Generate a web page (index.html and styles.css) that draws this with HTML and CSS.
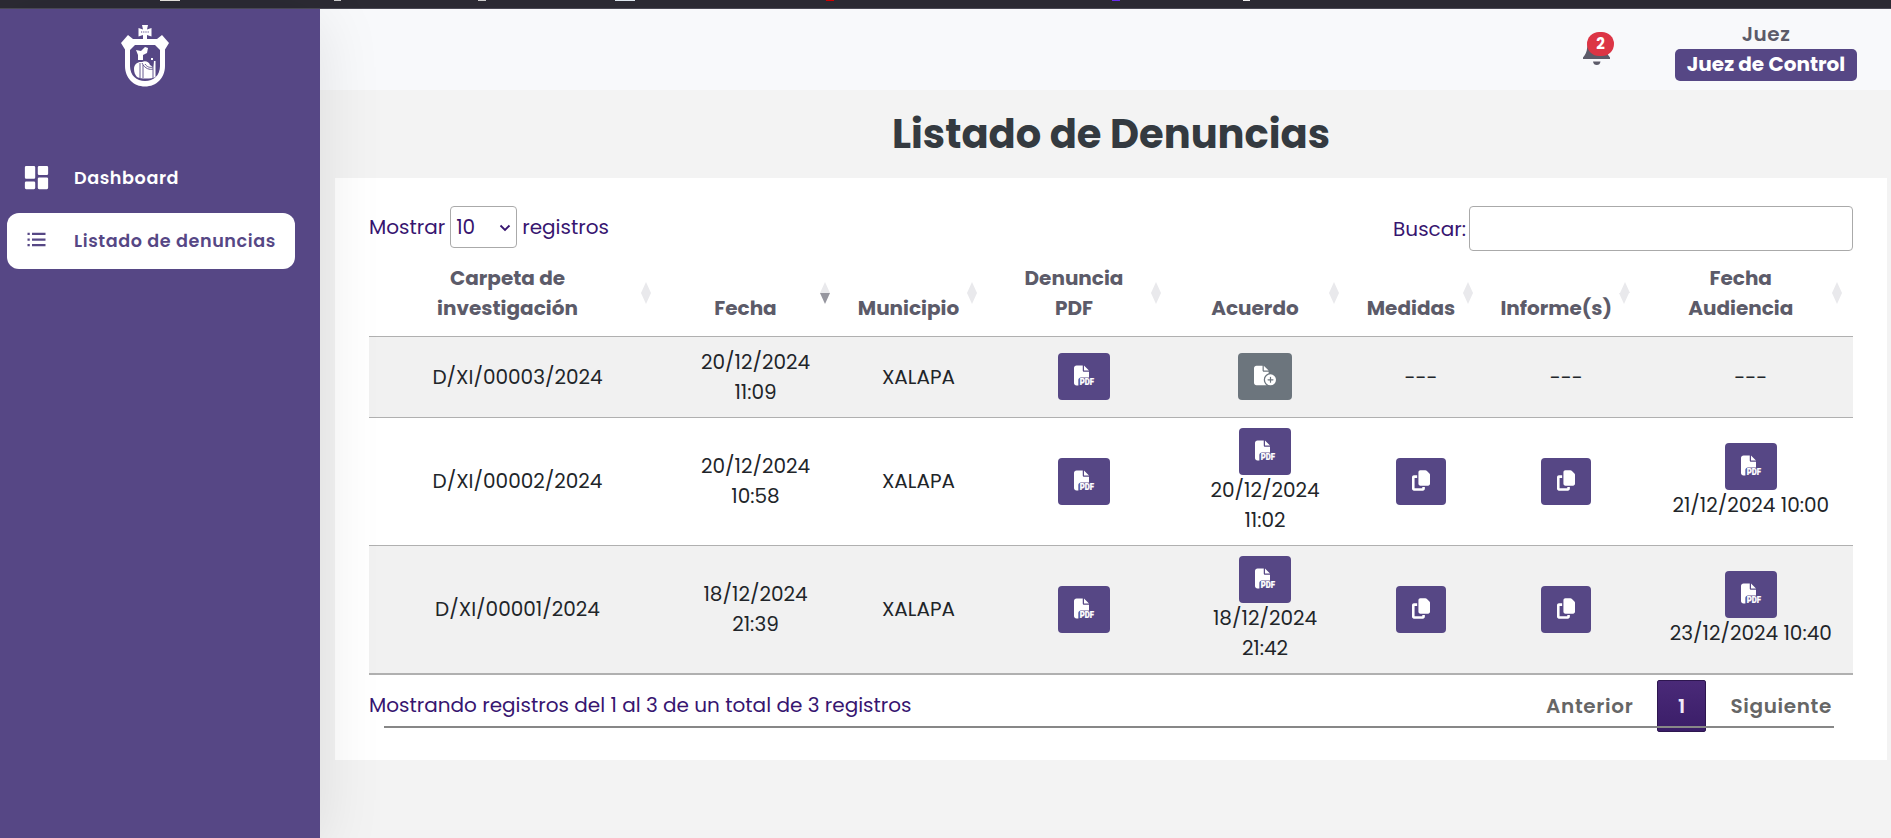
FILE: index.html
```html
<!DOCTYPE html>
<html lang="es">
<head>
<meta charset="utf-8">
<title>Listado de Denuncias</title>
<link rel="stylesheet" href="styles.css">
</head>
<body>
<svg class="sprite" aria-hidden="true">
  <symbol id="pdf" viewBox="0 0 512 512" overflow="visible">
    <path d="M0 64C0 28.7 28.7 0 64 0H224V128c0 17.7 14.3 32 32 32H384V304H176c-35.3 0-64 28.7-64 64V512H64c-35.3 0-64-28.7-64-64V64zM384 128H256V0z"/>
    <text x="148" y="510" class="pdf-label" textLength="364" lengthAdjust="spacingAndGlyphs">PDF</text>
  </symbol>
  <symbol id="file-plus" viewBox="0 0 576 512">
    <path d="M0 64C0 28.7 28.7 0 64 0H224V128c0 17.7 14.3 32 32 32H384v38.6C310.1 219.5 256 287.4 256 368c0 59.1 29.1 111.3 73.7 143.3c-3.2 .5-6.4 .7-9.7 .7H64c-35.3 0-64-28.7-64-64V64zm384 64H256V0L384 128zm48 96a144 144 0 1 1 0 288 144 144 0 1 1 0-288zm16 80c0-8.8-7.2-16-16-16s-16 7.2-16 16v48H368c-8.8 0-16 7.2-16 16s7.2 16 16 16h48v48c0 8.8 7.2 16 16 16s16-7.2 16-16V384h48c8.8 0 16-7.2 16-16s-7.2-16-16-16H448V304z"/>
  </symbol>
  <symbol id="copy" viewBox="0 0 448 512">
    <path d="M208 0H332.1c12.7 0 24.9 5.1 33.9 14.1l67.9 67.9c9 9 14.1 21.2 14.1 33.9V336c0 26.5-21.5 48-48 48H208c-26.5 0-48-21.5-48-48V48c0-26.5 21.5-48 48-48zM48 128h80v64H64V448H256V416h64v48c0 26.5-21.5 48-48 48H48c-26.5 0-48-21.5-48-48V176c0-26.5 21.5-48 48-48z"/>
  </symbol>
</svg>
<div class="browser-edge"></div>
<div class="app">
  <aside class="sidebar">
    <svg class="logo" viewBox="0 0 48 62">
      <path fill="#fff" d="M21 0h6l-1 4.500 4.500-1.500v8.500L26 10v4h10l5-4 7 8-4 6.500V41c0 12-8.500 20.500-20 20.500S4 53 4 41V24.500L0 18l7-8 5 4h10v-4l-4.500 1.500V3L22 4.500z"/>
      <path fill="#564785" d="M14 20h20l5 5v16c0 9.500-6.500 15-15 15S9 50.500 9 41V25z"/>
      <path fill="#fff" d="M15 25l5 1 4-4 3 1-1 5-4 2v5h-5v-5zM30 33h2v2h-2z"/>
      <path fill="#fff" d="M13 44c0-5 4-7.500 8-7 3-1.500 7-.5 8 3l3 2 1-6h1.500v16c-4 2-14.500 2-18.500 0-2-2-3-5-3-8z"/>
      <path fill="none" stroke="#564785" stroke-width=".9" d="M19 38v15M22 40v13M21 38c3 6 8 7 11 6M24 39c2 3 5 4 8 3M32 37v16"/>
      <path stroke="#564785" stroke-width="1" stroke-dasharray="1.200 1" d="M20 7h8"/>
    </svg>
    <nav class="menu">
      <a class="menu-item">
        <svg class="menu-icon" viewBox="0 0 24 24"><path d="M4 13h6a1 1 0 0 0 1-1V4a1 1 0 0 0-1-1H4a1 1 0 0 0-1 1v8a1 1 0 0 0 1 1zm-1 7a1 1 0 0 0 1 1h6a1 1 0 0 0 1-1v-4a1 1 0 0 0-1-1H4a1 1 0 0 0-1 1v4zm10 0a1 1 0 0 0 1 1h6a1 1 0 0 0 1-1v-7a1 1 0 0 0-1-1h-6a1 1 0 0 0-1 1v7zm1-10h6a1 1 0 0 0 1-1V4a1 1 0 0 0-1-1h-6a1 1 0 0 0-1 1v5a1 1 0 0 0 1 1z"/></svg>
        <span>Dashboard</span>
      </a>
      <a class="menu-item active">
        <svg class="menu-icon list-icon" viewBox="0 0 24 24"><path d="M4 6h2v2H4zm0 5h2v2H4zm0 5h2v2H4zm16-8V6H8.023v2H18.800zM8 11h12v2H8zm0 5h12v2H8z"/></svg>
        <span>Listado de denuncias</span>
      </a>
    </nav>
  </aside>
  <main class="main">
    <header class="topbar">
      <div class="bell">
        <svg width="27" height="31" viewBox="0 0 27 31"><path d="M0 24v-1.500c2.600-3 3.800-5.500 4.200-10C4.800 7 7.500 3 13.500 2.200 19.500 3 22.200 7 22.800 12.500c.4 4.500 1.600 7 4.200 10V24zM10 26.500h7.500c-.3 2.400-1.700 3.500-3.700 3.500s-3.500-1.100-3.800-3.500z"/></svg>
        <span class="count">2</span>
      </div>
      <div class="user">
        <span class="user-name">Juez</span>
        <span class="user-role">Juez de Control</span>
      </div>
    </header>
    <h1 class="title">Listado de Denuncias</h1>
    <section class="card">
      <div class="controls">
        <label class="length">Mostrar
          <span class="select-wrap"><select><option>10</option></select>
            <svg class="chevron" width="12" height="8" viewBox="0 0 12 8"><path d="M1.500 1.500 6 6l4.500-4.500"/></svg></span>
          registros</label>
        <label class="search">Buscar:<input type="text"></label>
      </div>
      <table class="grid">
        <colgroup><col class="c1"><col class="c2"><col class="c3"><col class="c4"><col class="c5"><col class="c6"><col class="c7"><col class="c8"></colgroup>
        <thead>
          <tr>
            <th>Carpeta de<br>investigación<i class="sort"></i></th>
            <th>Fecha<i class="sort desc"></i></th>
            <th>Municipio<i class="sort"></i></th>
            <th>Denuncia<br>PDF<i class="sort"></i></th>
            <th>Acuerdo<i class="sort"></i></th>
            <th>Medidas<i class="sort"></i></th>
            <th>Informe(s)<i class="sort"></i></th>
            <th>Fecha<br>Audiencia<i class="sort"></i></th>
          </tr>
        </thead>
        <tbody>
          <tr>
            <td>D/XI/00003/2024</td>
            <td>20/12/2024<br>11:09</td>
            <td>XALAPA</td>
            <td><a class="btn"><svg class="i-pdf"><use href="#pdf"/></svg></a></td>
            <td><a class="btn muted"><svg class="i-plus"><use href="#file-plus"/></svg></a></td>
            <td>---</td>
            <td>---</td>
            <td>---</td>
          </tr>
          <tr>
            <td>D/XI/00002/2024</td>
            <td>20/12/2024<br>10:58</td>
            <td>XALAPA</td>
            <td><a class="btn"><svg class="i-pdf"><use href="#pdf"/></svg></a></td>
            <td><a class="btn"><svg class="i-pdf"><use href="#pdf"/></svg></a>20/12/2024<br>11:02</td>
            <td><a class="btn"><svg class="i-copy"><use href="#copy"/></svg></a></td>
            <td><a class="btn"><svg class="i-copy"><use href="#copy"/></svg></a></td>
            <td><a class="btn"><svg class="i-pdf"><use href="#pdf"/></svg></a>21/12/2024 10:00</td>
          </tr>
          <tr>
            <td>D/XI/00001/2024</td>
            <td>18/12/2024<br>21:39</td>
            <td>XALAPA</td>
            <td><a class="btn"><svg class="i-pdf"><use href="#pdf"/></svg></a></td>
            <td><a class="btn"><svg class="i-pdf"><use href="#pdf"/></svg></a>18/12/2024<br>21:42</td>
            <td><a class="btn"><svg class="i-copy"><use href="#copy"/></svg></a></td>
            <td><a class="btn"><svg class="i-copy"><use href="#copy"/></svg></a></td>
            <td><a class="btn"><svg class="i-pdf"><use href="#pdf"/></svg></a>23/12/2024 10:40</td>
          </tr>
        </tbody>
      </table>
      <div class="footer">
        <div class="info">Mostrando registros del 1 al 3 de un total de 3 registros</div>
        <div class="pages"><a>Anterior</a><a class="current">1</a><a>Siguiente</a></div>
      </div>
      <hr class="rule">
    </section>
  </main>
</div>
</body>
</html>
```
FILE: styles.css
```css
* { box-sizing: border-box; }
body {
  margin: 0;
  height: 838px;
  overflow: hidden;
  background: #f3f3f3;
  font: 20px/30px Poppins, Inter, sans-serif;
  color: #212529;
}
.sprite { position: absolute; width: 0; height: 0; }
.pdf-label { font: 900 228px Roboto, sans-serif; stroke: currentColor; stroke-width: 6px; }

.browser-edge {
  height: 9px;
  border-bottom: 1px solid #4a4955;
  background:
    linear-gradient(#e8e4e0, #e8e4e0) 160px 0 / 20px 1px no-repeat,
    linear-gradient(#ccc, #ccc) 334px 0 / 7px 1px no-repeat,
    linear-gradient(#ccc, #ccc) 478px 0 / 8px 1px no-repeat,
    linear-gradient(#dde6ee, #dde6ee) 615px 0 / 20px 1px no-repeat,
    linear-gradient(#d00000, #d00000) 826px 0 / 8px 1px no-repeat,
    linear-gradient(#6a2cf0, #6a2cf0) 1112px 0 / 8px 1px no-repeat,
    linear-gradient(#eee, #eee) 1243px 0 / 7px 1px no-repeat,
    #2b2a33;
}
.app { display: flex; height: 829px; }

.sidebar {
  position: relative;
  z-index: 2;
  flex: none;
  width: 320px;
  background: #564785;
  box-shadow: 0 10px 60px rgba(0, 0, 0, .1);
}
.logo { display: block; width: 48px; height: 62px; margin: 16px 0 0 121px; }
.menu { display: flex; flex-direction: column; gap: 7px; margin: 63px 25px 0 7px; }
.menu-item {
  display: flex;
  align-items: center;
  height: 56px;
  padding-left: 14px;
  border-radius: 12px;
  color: #fff;
  font-size: 17.600px;
  font-weight: 600;
  letter-spacing: .580px;
}
.menu-icon { width: 31px; height: 31px; margin: -1px 22px 0 0; fill: currentColor; }
.menu-item.active { background: #fff; color: #564785; }
.list-icon { width: 27px; height: 27px; margin: -3px 24px 0 2px; }

.main { flex: 1; min-width: 0; }
.topbar {
  display: flex;
  justify-content: flex-end;
  height: 81px;
  padding-right: 34px;
  background: #f8f9fb;
}
.bell { position: relative; width: 27px; margin: 26px 65px 0 0; }
.bell svg { display: block; fill: #5c5b69; }
.count {
  position: absolute;
  left: 4px;
  top: -3px;
  width: 27px;
  height: 24px;
  border-radius: 12px;
  background: #dc3545;
  color: #fff;
  font-size: 15px;
  font-weight: 700;
  line-height: 23px;
  text-align: center;
}
.user { display: flex; flex-direction: column; align-items: center; width: 182px; padding-top: 10px; }
.user-name { color: #5c5b69; font-weight: 600; letter-spacing: .5px; }
.user-role {
  width: 182px;
  height: 32px;
  border-radius: 5px;
  background: #564785;
  color: #fff;
  font-weight: 700;
  line-height: 31px;
  text-align: center;
}
.title {
  height: 88px;
  margin: 0;
  padding: 20px 0 0 11px;
  color: #343a40;
  font-size: 40px;
  font-weight: 700;
  line-height: 48px;
  text-align: center;
}
.card { height: 582px; margin: 0 4px 0 15px; padding: 28px 34px 0; background: #fff; }

.controls { display: flex; justify-content: space-between; height: 47px; color: #371570; }
.length { display: flex; height: 42px; gap: 5px; align-items: center; }
.select-wrap { position: relative; }
.select-wrap select {
  display: block;
  appearance: none;
  width: 67px;
  height: 42px;
  padding: 0 5px;
  border: 1px solid #aaa;
  border-radius: 4px;
  background: transparent;
  color: inherit;
  font: inherit;
}
.chevron { position: absolute; right: 6px; top: 18px; fill: none; stroke: #371570; stroke-width: 1.800; }
.search { display: flex; gap: 3px; align-items: center; height: 45px; }
.search input { width: 384px; height: 45px; border: 1px solid #aaa; border-radius: 4px; background: transparent; }

.grid { width: 1484px; table-layout: fixed; border-collapse: separate; border-spacing: 0; border-bottom: 1px solid #b0b0b0; }
.c1 { width: 297px; }
.c2 { width: 179px; }
.c3 { width: 147px; }
.c4 { width: 184px; }
.c5 { width: 178px; }
.c6 { width: 134px; }
.c7 { width: 156.500px; }
.c8 { width: 208.500px; }
.grid th {
  position: relative;
  height: 84px;
  padding: 10px 20px 13px 0;
  border-bottom: 1px solid #b0b0b0;
  color: #5c5b69;
  font-weight: 700;
  vertical-align: bottom;
  white-space: nowrap;
}
.grid th:last-child { padding-right: 16px; }
.grid td { padding: 9px 0 10px; border-bottom: 1px solid #b0b0b0; text-align: center; vertical-align: middle; }
.grid tbody tr:first-child td { height: 81px; }
.grid tbody tr:not(:first-child) td { height: 128px; }
.grid tbody tr:not(:first-child) td:nth-child(5) { padding-top: 10px; }
.grid td:last-child { padding-left: 4px; }
.grid tbody tr:nth-child(odd) td { background: #f1f1f1; }

/* sort arrows: pale up and down triangles, darker for the sorted direction */
.sort {
  position: absolute;
  right: 15px;
  top: 29px;
  border: solid transparent;
  border-width: 0 5.500px 11px;
  border-bottom-color: #e9e9ec;
}
.sort::after {
  content: "";
  position: absolute;
  left: -5.500px;
  top: 11px;
  border: solid transparent;
  border-width: 11px 5.500px 0;
  border-top-color: #e9e9ec;
}
.sort.desc::after { border-top-color: #96969f; }
th:last-child .sort { right: 11px; }

.btn {
  display: block;
  width: fit-content;
  height: 47px;
  margin: 0 auto;
  padding: 12px 16px;
  border-radius: 4px;
  background: #564785;
  color: #fff;
}
.btn.muted { background: #6c757d; }
.btn svg { display: block; height: 21px; fill: currentColor; overflow: visible; }
.i-pdf { width: 20px; }
.i-plus { width: 22px; }
.i-copy { width: 18px; }

.footer { display: flex; justify-content: space-between; height: 57px; padding-top: 5px; }
.info { padding-top: 10px; color: #371570; }
.pages { display: flex; color: #666; font-weight: 600; letter-spacing: .650px; line-height: 50px; }
.pages a { height: 52px; padding: 0 20px 0 23px; border: 1px solid transparent; border-radius: 2px; }
.pages a:first-child { padding-right: 23px; }
.pages .current {
  width: 49px;
  padding: 0;
  border-color: #2d164f;
  background: linear-gradient(#4a2a78, #3a1d68);
  color: #f0eaf8;
  text-align: center;
}
.rule { position: relative; height: 2px; margin: -6px 19px 0 15px; border: 0; background: #878787; }
```
